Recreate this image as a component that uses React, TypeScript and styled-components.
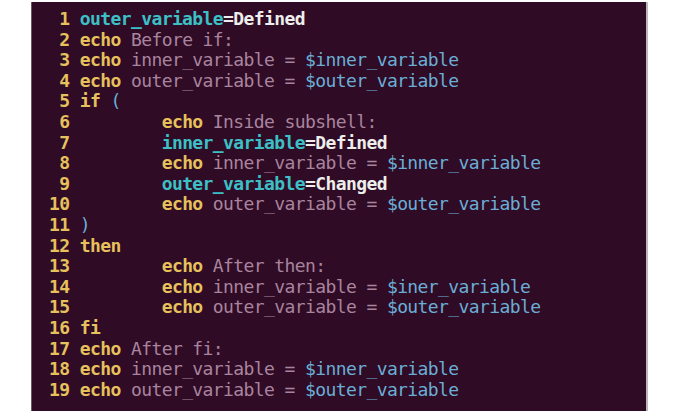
import React from "react";
import styled, { createGlobalStyle } from "styled-components";

const Global = createGlobalStyle`
  html, body { margin: 0; padding: 0; background: #ffffff; }
  body { width: 680px; height: 411px; overflow: hidden; }
`;

const Page = styled.div`
  width: 680px;
  height: 411px;
  padding: 2px 0 0 31px;
  box-sizing: border-box;
`;

const Terminal = styled.pre`
  margin: 0;
  width: 617px;
  height: 409px;
  box-sizing: border-box;
  background: #2f0b25;
  border-left: 1px solid #6a5a66;
  border-right: 2px solid #bdb7bb;
  padding: 7px 0 0 17px;
  font-family: "DejaVu Sans Mono", "Liberation Mono", monospace;
  font-size: 18px;
  letter-spacing: -0.6px;
  line-height: 20.6px;
  color: #eeeeec;
  white-space: pre;
  overflow: hidden;
`;

const Line = styled.div`
  display: block;
`;

const Num = styled.span`
  display: inline-block;
  width: 20.5px;
  text-align: right;
  color: #e6c15c;
  font-weight: bold;
`;

type Kind = "kw" | "var" | "plain" | "str" | "ref" | "paren" | "sp";

const Tok = styled.span<{ $k: Kind }>`
  font-weight: ${(p) => (p.$k === "kw" || p.$k === "var" || p.$k === "plain" ? "bold" : "normal")};
  color: ${(p) =>
    p.$k === "kw"
      ? "#e6c15c"
      : p.$k === "var"
      ? "#3cc0c6"
      : p.$k === "plain"
      ? "#eeeeec"
      : p.$k === "str"
      ? "#a9849f"
      : p.$k === "ref" || p.$k === "paren"
      ? "#6aaed6"
      : "inherit"};
`;

type T = [Kind, string];
const IND = "        ";

const lines: T[][] = [
  [["var", "outer_variable"], ["plain", "=Defined"]],
  [["kw", "echo"], ["sp", " "], ["str", "Before if:"]],
  [["kw", "echo"], ["sp", " "], ["str", "inner_variable = "], ["ref", "$inner_variable"]],
  [["kw", "echo"], ["sp", " "], ["str", "outer_variable = "], ["ref", "$outer_variable"]],
  [["kw", "if"], ["sp", " "], ["paren", "("]],
  [["sp", IND], ["kw", "echo"], ["sp", " "], ["str", "Inside subshell:"]],
  [["sp", IND], ["var", "inner_variable"], ["plain", "=Defined"]],
  [["sp", IND], ["kw", "echo"], ["sp", " "], ["str", "inner_variable = "], ["ref", "$inner_variable"]],
  [["sp", IND], ["var", "outer_variable"], ["plain", "=Changed"]],
  [["sp", IND], ["kw", "echo"], ["sp", " "], ["str", "outer_variable = "], ["ref", "$outer_variable"]],
  [["paren", ")"]],
  [["kw", "then"]],
  [["sp", IND], ["kw", "echo"], ["sp", " "], ["str", "After then:"]],
  [["sp", IND], ["kw", "echo"], ["sp", " "], ["str", "inner_variable = "], ["ref", "$iner_variable"]],
  [["sp", IND], ["kw", "echo"], ["sp", " "], ["str", "outer_variable = "], ["ref", "$outer_variable"]],
  [["kw", "fi"]],
  [["kw", "echo"], ["sp", " "], ["str", "After fi:"]],
  [["kw", "echo"], ["sp", " "], ["str", "inner_variable = "], ["ref", "$inner_variable"]],
  [["kw", "echo"], ["sp", " "], ["str", "outer_variable = "], ["ref", "$outer_variable"]],
];

export default function App() {
  return (
    <>
      <Global />
      <Page>
        <Terminal>
          {lines.map((toks, i) => (
            <Line key={i}>
              <Num>{i + 1}</Num>{" "}
              {toks.map(([k, t], j) => (
                <Tok key={j} $k={k}>
                  {t}
                </Tok>
              ))}
            </Line>
          ))}
        </Terminal>
      </Page>
    </>
  );
}
